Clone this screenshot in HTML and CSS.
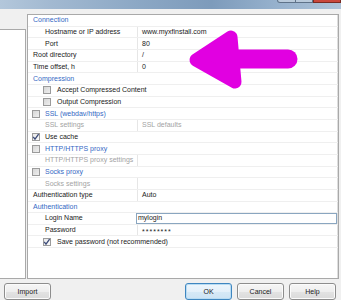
FILE: index.html
```html
<!DOCTYPE html>
<html>
<head>
<meta charset="utf-8">
<link rel="stylesheet" href="styles.css">
</head>
<body>
<div class="titlebar">
  <div class="wbtn min"></div>
  <div class="wbtn max"></div>
  <div class="wbtn close"></div>
</div>
<div class="main">
  <div class="leftpane"></div>
  <div class="grid">
    <div class="row"><span class="cat">Connection</span></div>
    <div class="row"><div class="name ind">Hostname or IP address</div><div class="val">www.myxfinstall.com</div></div>
    <div class="row"><div class="name ind">Port</div><div class="val">80</div></div>
    <div class="row"><div class="name">Root directory</div><div class="val">/</div></div>
    <div class="row"><div class="name">Time offset, h</div><div class="val">0</div></div>
    <div class="row"><span class="cat">Compression</span></div>
    <div class="row chk ind"><span class="box"></span><span>Accept Compressed Content</span></div>
    <div class="row chk ind"><span class="box"></span><span>Output Compression</span></div>
    <div class="row chk"><span class="box"></span><span class="blue">SSL (webdav/https)</span></div>
    <div class="row"><div class="name ind dis">SSL settings</div><div class="val dis">SSL defaults</div></div>
    <div class="row chk"><span class="box on"><svg viewBox="0 0 8 8" width="8" height="8"><path d="M1.2 3.8 L3 6.2 L6.6 1.2" fill="none" stroke="#3b4a78" stroke-width="1.3"/></svg></span><span>Use cache</span></div>
    <div class="row chk"><span class="box"></span><span class="blue">HTTP/HTTPS proxy</span></div>
    <div class="row"><div class="name ind dis">HTTP/HTTPS proxy settings</div><div class="val"></div></div>
    <div class="row chk"><span class="box"></span><span class="blue">Socks proxy</span></div>
    <div class="row"><div class="name ind dis">Socks settings</div><div class="val"></div></div>
    <div class="row"><div class="name">Authentication type</div><div class="val">Auto</div></div>
    <div class="row"><span class="cat">Authentication</span></div>
    <div class="row"><div class="name ind">Login Name</div><div class="val edit">mylogin</div></div>
    <div class="row"><div class="name ind">Password</div><div class="val"><span class="pw">********</span></div></div>
    <div class="row chk ind"><span class="box on"><svg viewBox="0 0 8 8" width="8" height="8"><path d="M1.2 3.8 L3 6.2 L6.6 1.2" fill="none" stroke="#3b4a78" stroke-width="1.3"/></svg></span><span>Save password (not recommended)</span></div>
  </div>
</div>
<div class="buttons">
  <button class="btn">Import</button>
  <div class="spacer"></div>
  <button class="btn default">OK</button>
  <button class="btn">Cancel</button>
  <button class="btn">Help</button>
</div>
<svg class="arrow" width="341" height="300" viewBox="0 0 341 300">
  <polygon points="196,60 231,37 235,82" fill="#e100e1" stroke="#e100e1" stroke-width="13" stroke-linejoin="round"/>
  <line x1="228" y1="59" x2="288" y2="59" stroke="#e100e1" stroke-width="19" stroke-linecap="round"/>
</svg>
</body>
</html>
```
FILE: styles.css
```css
html, body {
  margin: 0;
  padding: 0;
}
body {
  width: 341px;
  height: 300px;
  overflow: hidden;
  background: #f0f0f0;
  font-family: "Liberation Sans", Arial, sans-serif;
  font-size: 7px;
  color: #1a1a1a;
  position: relative;
}
.titlebar {
  height: 9px;
  background: linear-gradient(to right, #b3c7db 0%, #a2b9d1 15%, #8ca8c5 40%, #7d9bbb 62%, #95b0cc 80%, #aec3d8 100%);
  display: flex;
  justify-content: flex-end;
  align-items: flex-start;
}
.wbtn {
  height: 3px;
  box-sizing: border-box;
  border: 1px solid #5f7389;
  border-top: none;
  background: #b9cadb;
}
.wbtn.min { width: 19px; border-radius: 0 0 0 3px; }
.wbtn.max { width: 17px; border-left: none; }
.wbtn.close { width: 28px; background: #c9473b; border-color: #7a2a22; }
.main {
  display: flex;
  align-items: flex-start;
  padding-top: 5px;
  height: 265px;
}
.leftpane {
  margin-left: -1px;
  margin-top: 15px;
  width: 27px;
  height: 250px;
  box-sizing: border-box;
  background: #fff;
  border: 1px solid #a9a9a9;
}
.grid {
  margin-left: 1px;
  width: 312px;
  height: 265px;
  box-sizing: border-box;
  background: #fff;
  border: 1px solid #a9a9a9;
  box-shadow: inset -1px 0 0 #dedede;
}
.row {
  height: 11.6667px;
  box-sizing: border-box;
  border-bottom: 1px solid #efefef;
  display: flex;
  align-items: center;
  white-space: nowrap;
  line-height: 8px;
}
.cat {
  color: #3468c4;
  padding-left: 5px;
}
.name {
  width: 109px;
  flex: none;
  box-sizing: border-box;
  padding-left: 5px;
  height: 100%;
  display: flex;
  align-items: center;
  overflow: hidden;
}
.name.ind { padding-left: 17px; }
.val {
  flex: 1;
  height: 100%;
  box-sizing: border-box;
  border-left: 1px solid #e6e6e6;
  padding-left: 4px;
  display: flex;
  align-items: center;
}
.val.edit {
  border: 1px solid #8aa6c0;
  margin-left: -1px;
  margin-right: 1px;
  padding-left: 1px;
}
.pw {
  padding-top: 3px;
  letter-spacing: 1px;
}
.dis { color: #a3a3a3; }
.blue { color: #3468c4; }
.chk { padding-left: 4px; }
.chk.ind { padding-left: 15px; }
.box {
  width: 8px;
  height: 8px;
  box-sizing: border-box;
  border: 1px solid #9b9b9b;
  background: linear-gradient(135deg, #d6d6d6, #efefef);
  margin-right: 5px;
  flex: none;
  display: flex;
  align-items: center;
  justify-content: center;
}
.chk.ind .box { margin-right: 6px; }
.box.on {
  background: linear-gradient(135deg, #e8e8e8, #fafafa);
}
.box svg { display: block; margin: -1px; }
.buttons {
  display: flex;
  padding: 4px 5px 0 4px;
  gap: 5px;
}
.spacer { flex: 1; }
.btn {
  width: 47px;
  height: 17px;
  box-sizing: border-box;
  margin: 0;
  padding: 0;
  font-family: "Liberation Sans", Arial, sans-serif;
  font-size: 7px;
  color: #1a1a1a;
  border: 1px solid #8d8d8d;
  border-radius: 3px;
  background: linear-gradient(#f6f6f6 0%, #eeeeee 50%, #e3e3e3 51%, #dadada 100%);
  box-shadow: inset 0 0 0 1px #fbfbfb;
}
.btn.default {
  border-color: #3f86c0;
  background: linear-gradient(#eef6fc 0%, #e4f0fa 50%, #d6e9f7 51%, #cde3f4 100%);
  box-shadow: inset 0 0 0 1px #b9dcf3;
}
.arrow {
  position: absolute;
  left: 0;
  top: 0;
  pointer-events: none;
}
```
